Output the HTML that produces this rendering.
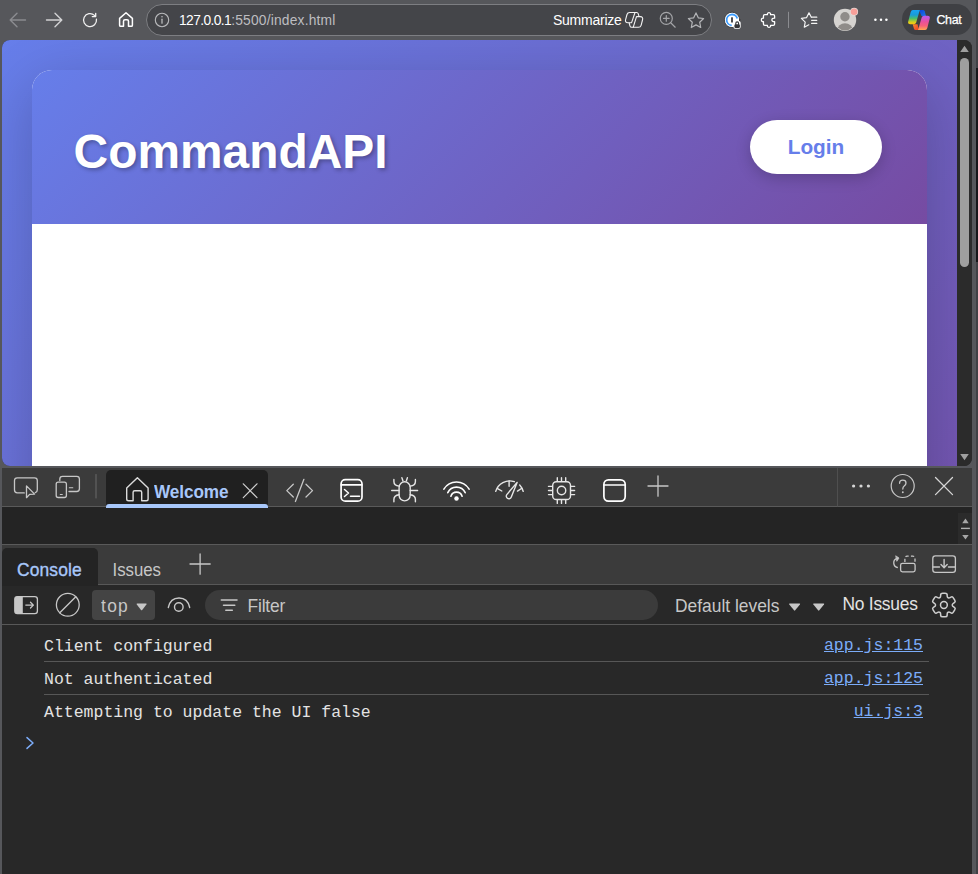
<!DOCTYPE html>
<html lang="en">
<head>
<meta charset="utf-8">
<title>CommandAPI</title>
<style>
*{box-sizing:border-box;margin:0;padding:0}
html,body{width:978px;height:874px;overflow:hidden}
body{background:#56575b;font-family:"Liberation Sans",sans-serif;position:relative}
.abs{position:absolute}
svg{position:absolute;overflow:visible}
/* ---------- browser toolbar ---------- */
#tb{position:absolute;left:0;top:0;width:978px;height:40px;background:#56575b}
#addr{position:absolute;left:146px;top:4px;width:566px;height:32px;border-radius:16px;background:#444549;border:1px solid #7d7e82}
#url{position:absolute;left:179px;top:13px;font-size:13.8px;line-height:16px;color:#bdbdc0;white-space:nowrap;letter-spacing:0.2px}
#url b{font-weight:normal;color:#fff;letter-spacing:-0.6px}
#summ{position:absolute;left:553px;top:12px;font-size:14px;line-height:16px;color:#fff;white-space:nowrap;letter-spacing:-0.25px}
#chat{position:absolute;left:902px;top:4px;width:69.500px;height:31px;border-radius:15.500px;background:#3f4044}
#chat span{position:absolute;left:34.500px;top:8px;font-size:12.4px;line-height:16px;color:#fff;letter-spacing:-0.35px;-webkit-text-stroke:0.25px #fff}
/* ---------- page viewport ---------- */
#vp{position:absolute;left:2px;top:40px;width:970px;height:426px;border-radius:8px;overflow:hidden;background:#2b2b2b}
#pg{position:absolute;left:0;top:0;width:955px;height:803px;background:linear-gradient(135deg,#667eea 0%,#764ba2 100%)}
#card{position:absolute;left:30px;top:30px;width:895px;height:740px;border-radius:20px;background:#fff;box-shadow:0 15px 60px rgba(0,0,0,.2);overflow:hidden}
#hdr{position:absolute;left:0;top:0;width:895px;height:154px;background:linear-gradient(135deg,#667eea 0%,#764ba2 100%)}
#h1{position:absolute;left:41.600px;top:53.5px;font-size:47.9px;line-height:56px;font-weight:bold;color:#fff;letter-spacing:0;text-shadow:2px 2px 4px rgba(0,0,0,.3);white-space:nowrap}
#login{position:absolute;left:718px;top:50px;width:132px;height:54px;border-radius:27px;background:#fff;box-shadow:0 4px 15px rgba(0,0,0,.2);color:#667eea;font-weight:bold;font-size:20.8px;line-height:54px;text-align:center}
#sb{position:absolute;left:955px;top:0;width:15px;height:426px;background:#2b2b2b}
#sb .th{position:absolute;left:3px;top:18px;width:9px;height:209px;border-radius:4.5px;background:#9f9f9f}
/* ---------- devtools ---------- */
#dt{position:absolute;left:2px;top:468px;width:970px;height:406px;background:#282828;color:#e3e3e3}
#dtbar{position:absolute;left:0;top:0;width:970px;height:38px;background:#3b3b3b}
#dtline1{position:absolute;left:0;top:38px;width:970px;height:1px;background:#5a5a5a}
#dtgap{position:absolute;left:0;top:39px;width:970px;height:37px;background:#242424}
#dtline2{position:absolute;left:0;top:76px;width:970px;height:1px;background:#5a5a5a}
#drw{position:absolute;left:0;top:77px;width:970px;height:40px;background:#3b3b3b}
#dtline3{position:absolute;left:0;top:116px;width:970px;height:1px;background:#585858}
#ctb{position:absolute;left:0;top:118px;width:970px;height:38px;background:#282828}
#dtline4{position:absolute;left:0;top:156px;width:970px;height:1px;background:#585858}
.ui{font-size:16.4px;line-height:20px;white-space:nowrap;position:absolute;letter-spacing:-0.2px;transform:scaleY(1.05);transform-origin:0 16px}
.mono{font-family:"Liberation Mono",monospace;font-size:16.5px;line-height:20px;white-space:nowrap;position:absolute;color:#e3e3e3}
.lnk{font-family:"Liberation Mono",monospace;font-size:16.5px;line-height:20px;white-space:nowrap;position:absolute;color:#7cacf8;text-decoration:underline}

#wtab{position:absolute;left:104px;top:2px;width:162px;height:37px;border-radius:5px 5px 0 0;background:#202020}
#wul{position:absolute;left:104px;top:36px;width:162px;height:3.5px;border-radius:3px 3px 0 0;background:#a8c7fa}
#gapsb{position:absolute;left:956px;top:45px;width:14px;height:31px;background:#2b2b2b}
#ctab{position:absolute;left:0;top:80px;width:96px;height:38px;border-radius:5px 5px 0 0;background:#242424}
#topbtn{position:absolute;left:90px;top:122px;width:63px;height:30px;border-radius:4px;background:#444444}
#filt{position:absolute;left:203px;top:122px;width:453px;height:30px;border-radius:15px;background:#3b3b3b}
.row{position:absolute;left:42px;width:885px;height:1px;background:#575757}
</style>
</head>
<body>
<div id="tb">
  <div id="addr"></div>
  <div id="url"><b>127.0.0.1</b>:5500/index.html</div>
  <div id="summ">Summarize</div>
  <div id="chat"><span>Chat</span></div>

  <svg id="tbsvg" width="978" height="40" viewBox="0 0 978 40" style="left:0;top:0" fill="none" stroke-linecap="round" stroke-linejoin="round">
    <!-- back -->
    <path d="M25.5 20H10.5M17 13.2L10.2 20L17 26.8" stroke="#8b8c90" stroke-width="1.4"/>
    <!-- forward -->
    <path d="M46.5 20H61.5M55 13.2L61.8 20L55 26.8" stroke="#d2d2d4" stroke-width="1.4"/>
    <!-- refresh -->
    <path d="M96.450 19.200A6.500 6.500 0 1 1 94.500 15.400" stroke="#f0f0f0" stroke-width="1.300"/>
    <path d="M95.700 13.300V16.600H92.300" stroke="#f4f4f4" stroke-width="1.300"/>
    <path d="M95.700 14.200V16.600H93.300Z" fill="#f4f4f4" stroke="none"/>
    <!-- home -->
    <path d="M119.6 18.4L126 12.7L132.4 18.4V25.2Q132.400 26.3 131.300 26.3H128.500V21.200Q128.500 19.700 127.000 19.700H125.000Q123.500 19.700 123.500 21.200V26.3H120.700Q119.600 26.3 119.600 25.200Z" stroke="#ffffff" stroke-width="1.5"/>
    <!-- info -->
    <circle cx="162" cy="20" r="6.7" stroke="#b9babc" stroke-width="1.1"/>
    <path d="M162 19.2V23.2" stroke="#b9babc" stroke-width="1.3"/>
    <circle cx="162" cy="16.8" r="0.8" fill="#b9babc" stroke="none"/>
    <!-- copilot outline -->
    <g stroke="#f2f2f2" stroke-width="1.100">
      <path d="M635.000 12.500H629.600Q627.600 12.500 627.000 14.500L625.600 19.600Q624.800 22.700 628.000 22.700H631.600Z"/>
      <path d="M635.000 12.500H636.600Q637.800 12.500 638.200 13.700L639.000 16.400"/>
      <path d="M633.200 27.300H638.500Q640.500 27.300 641.100 25.300L642.500 20.000Q643.400 16.600 640.200 16.600H636.500Z"/>
      <path d="M633.200 27.300H631.600Q630.400 27.300 630.000 26.100L629.200 23.000"/>
    </g>
    <!-- zoom -->
    <g stroke="#a4a5a8" stroke-width="1.2">
      <circle cx="666.3" cy="18.4" r="6"/>
      <path d="M670.700 22.800L675.200 27.200M663.500 18.400H669.100M666.300 15.600V21.200"/>
    </g>
    <!-- star -->
    <path d="M696 12.900L698.300 17.800L703.600 18.500L699.700 22.200L700.700 27.500L696 24.900L691.300 27.500L692.300 22.200L688.400 18.500L693.700 17.800Z" stroke="#b4b5b8" stroke-width="1.2"/>
    <!-- 1password-like -->
    <circle cx="732.050" cy="19.900" r="7.700" fill="#ffffff" stroke="#2b2c30" stroke-width="0.800"/>
    <rect x="733.400" y="20.800" width="7.300" height="8.000" rx="2.600" fill="#ffffff" stroke="none"/>
    <path d="M737.250 18.400A5.400 5.400 0 1 0 731.700 25.300" stroke="#3b9cff" stroke-width="1.800" stroke-linecap="butt"/>
    <rect x="731.100" y="17.300" width="1.800" height="5.200" fill="#3a3b3f" stroke="none"/>
    <rect x="734.400" y="24.200" width="5.500" height="3.700" rx="1.200" fill="#333437" stroke="none"/>
    <path d="M735.800 24.400V23.300A1.400 1.400 0 0 1 738.600 23.300V24.400" stroke="#333437" stroke-width="1.100"/>
    <!-- puzzle -->
    <path d="M764.750 14.700H767.400C767.000 12.000 771.000 12.000 770.600 14.700H773.300Q774.600 14.700 774.600 16.000V18.200C771.000 17.700 771.000 22.100 774.600 21.600V24.000Q774.600 25.300 773.300 25.300H770.600C771.000 28.000 767.000 28.000 767.400 25.300H764.750Q763.450 25.300 763.450 24.000V21.600C760.700 22.100 760.700 17.700 763.450 18.200V16.000Q763.450 14.700 764.750 14.700Z" stroke="#ffffff" stroke-width="1.300"/>
    <!-- separator -->
    <path d="M788.500 12.200V27.600" stroke="#8b8c90" stroke-width="1"/>
    <!-- favourites -->
    <g stroke="#f4f4f4" stroke-width="1.200">
      <path d="M811.300 17.200L809.000 12.800L806.600 17.600L801.400 18.400L805.200 22.100L804.300 27.200L808.800 24.800"/>
      <path d="M811.600 17.200H816.800M811.600 20.300H816.800M811.600 23.400H816.800"/>
    </g>
    <!-- avatar -->
    <circle cx="845.000" cy="19.900" r="11.200" fill="#d5d3d0" stroke="none"/>
    <circle cx="844.950" cy="16.800" r="4.700" fill="#8f8c89" stroke="none"/>
    <clipPath id="avc"><circle cx="845.000" cy="19.900" r="10.500"/></clipPath>
    <ellipse cx="845.000" cy="30.200" rx="7.700" ry="7.000" fill="#8f8c89" stroke="none" clip-path="url(#avc)"/>
    <circle cx="854.100" cy="11.700" r="4.000" fill="#e6dbd8" stroke="none"/>
    <circle cx="854.100" cy="11.700" r="3.300" fill="#f79f99" stroke="none"/>
    <!-- copilot colour logo -->
    <defs>
      <linearGradient id="cgl" x1="0" y1="0" x2="0" y2="1"><stop offset="0" stop-color="#18a4f4"/><stop offset=".35" stop-color="#1a9bd8"/><stop offset=".6" stop-color="#4bbf6a"/><stop offset=".85" stop-color="#d9cf1c"/><stop offset="1" stop-color="#fcc40f"/></linearGradient>
      <linearGradient id="cgr" x1="0" y1="0" x2="0" y2="1"><stop offset="0" stop-color="#b45cf5"/><stop offset=".4" stop-color="#e8509f"/><stop offset=".7" stop-color="#f7607a"/><stop offset="1" stop-color="#ffa850"/></linearGradient>
      <linearGradient id="cgt" x1="0" y1="0" x2="1" y2="1"><stop offset="0" stop-color="#0c3fd8"/><stop offset="1" stop-color="#1c78e8"/></linearGradient>
      <linearGradient id="cgb" x1="0" y1="0" x2="1" y2="1"><stop offset="0" stop-color="#ff8a30"/><stop offset="1" stop-color="#e83a24"/></linearGradient>
    </defs>
    <path d="M919.000 9.900H923.000Q924.300 9.900 924.700 11.200L926.000 15.900H921.500Z" fill="url(#cgt)" stroke="none"/>
    <path d="M919.000 30.000H915.700Q914.400 30.000 914.000 28.700L912.700 24.200H917.500Z" fill="url(#cgb)" stroke="none"/>
    <path d="M912.900 9.900H919.800L916.200 22.500Q915.700 24.300 913.800 24.300H910.300Q907.500 24.300 908.200 21.500L910.700 12.000Q911.300 9.900 912.900 9.900Z" fill="url(#cgl)" stroke="none"/>
    <path d="M925.200 30.000H918.000L921.700 17.500Q922.200 15.800 924.100 15.800H927.600Q930.400 15.800 929.700 18.600L927.300 28.000Q926.800 30.000 925.200 30.000Z" fill="url(#cgr)" stroke="none"/>
    <!-- dots -->
    <circle cx="875.400" cy="19.700" r="1.250" fill="#fff" stroke="none"/>
    <circle cx="881.000" cy="19.700" r="1.250" fill="#fff" stroke="none"/>
    <circle cx="886.400" cy="19.700" r="1.250" fill="#fff" stroke="none"/>
  </svg>
</div>

<div id="vp">
  <div id="pg">
    <div id="card">
      <div id="hdr">
        <div id="h1">CommandAPI</div>
        <div id="login">Login</div>
      </div>
    </div>
  </div>
  <div id="sb"><div class="th"></div>
    <svg width="15" height="426" viewBox="0 0 15 426" style="left:0;top:0"><path d="M3.200 12.000L7.500 5.800L11.800 12.000ZM3.200 414.000L7.500 420.200L11.800 414.000Z" fill="#9f9f9f"/></svg>
  </div>
</div>

<div class="abs" style="left:976.300px;top:0;width:2px;height:874px;background:#404145"></div>
<div class="abs" style="left:976.300px;top:68px;width:2px;height:194px;background:#17171a"></div>
<div id="dt">
  <div id="dtbar"></div>
  <div id="dtline1"></div>
  <div id="dtgap"></div>
  <div id="dtline2"></div>
  <div id="drw"></div>
  <div id="dtline3"></div>
  <div id="ctb"></div>
  <div id="dtline4"></div>

  <div id="wtab"></div>
  <div id="wul"></div>
  <div class="ui" id="t-welcome" style="left:152px;top:14px;color:#a8c7fa;font-weight:bold;font-size:17.2px;letter-spacing:-0.1px;transform:scaleY(1.1)">Welcome</div>
  <div id="gapsb"></div>
  <div id="ctab"></div>
  <div class="ui" id="t-console" style="left:15px;top:92px;color:#a8c7fa;font-size:17.4px;letter-spacing:0.15px;-webkit-text-stroke:0.35px #a8c7fa">Console</div>
  <div class="ui" id="t-issues" style="left:110.500px;top:93px;color:#c7c7c7;font-size:16.8px;letter-spacing:0">Issues</div>
  <div id="topbtn"></div>
  <div class="ui" id="t-top" style="left:99px;top:128px;color:#c7c7c7;font-size:17.4px;letter-spacing:1.3px">top</div>
  <div id="filt"></div>
  <div class="ui" id="t-filter" style="left:245.500px;top:128px;color:#c7c7c7;font-size:17.4px;letter-spacing:-0.17px">Filter</div>
  <div class="ui" id="t-levels" style="left:673px;top:128px;color:#c7c7c7;font-size:17.4px;letter-spacing:0">Default levels</div>
  <div class="ui" id="t-noissues" style="left:840.500px;top:126px;color:#e3e3e3;font-size:17.4px;letter-spacing:-0.25px">No Issues</div>

  <svg id="dtsvg" width="978" height="874" viewBox="0 0 978 874" style="left:-2px;top:-468px" fill="none" stroke="#c7c7c7" stroke-width="1.3" stroke-linecap="round" stroke-linejoin="round">
    <!-- inspect -->
    <path d="M24.300 492.900H17.300Q14.500 492.900 14.500 490.100V480.600Q14.500 477.800 17.300 477.800H34.500Q37.300 477.800 37.300 480.600V489.800Q37.300 492.200 35.300 492.700"/>
    <path d="M26.500 485.900V497.700L29.600 494.400L34.600 494.100Z"/>
    <!-- device -->
    <path d="M59.800 480.500V479.000Q59.800 476.300 62.500 476.300H76.700Q79.400 476.300 79.400 479.000V488.800Q79.400 491.500 76.700 491.500H69.000"/>
    <rect x="56.200" y="482.200" width="10.200" height="15.300" rx="2"/>
    <path d="M60.300 494.500H62.300M69.300 487.700H72.800" stroke-width="1.100"/>
    <!-- separator -->
    <path d="M96 474.500V498" stroke="#6a6a6a" stroke-width="1"/>
    <!-- welcome home -->
    <path d="M126.700 488.000L137.400 477.800L148.100 488.000V499.000Q148.100 500.800 146.300 500.800H141.700V492.300Q141.700 490.700 140.100 490.700H134.700Q133.100 490.700 133.100 492.300V500.800H128.500Q126.700 500.800 126.700 499.000Z" stroke="#dcdcdc" stroke-width="1.4"/>
    <!-- tab close -->
    <path d="M243.300 483.800L257.000 497.600M257.000 483.800L243.300 497.600" stroke="#d0d0d0" stroke-width="1.200"/>
    <!-- elements </> -->
    <path d="M293.300 484.300L286.800 490.600L293.300 497.000M306.000 484.300L312.500 490.600L306.000 497.000M303.900 479.300L295.400 501.500" stroke-width="1.300"/>
    <!-- console -->
    <g stroke="#ffffff" stroke-width="1.700">
      <rect x="341.100" y="479.600" width="20.900" height="21.600" rx="4.200"/>
      <path d="M341.300 484.900H361.800"/>
      <path d="M344.500 489.500L348.500 493.000L344.500 496.500M350.500 496.200H359.500" stroke-width="1.500"/>
    </g>
    <!-- bug -->
    <g stroke="#e6e6e6" stroke-width="1.400">
      <rect x="399.100" y="481.800" width="11.100" height="19.100" rx="5.550"/>
      <path d="M401.900 477.700L402.900 480.800M407.400 477.700L406.400 480.800"/>
      <path d="M399.100 486.100Q393.900 485.500 393.900 481.500V479.500M410.200 486.100Q415.400 485.500 415.400 481.500V479.500"/>
      <path d="M391.700 490.500H399.100M410.200 490.500H417.600"/>
      <path d="M399.100 494.700Q393.900 495.300 393.900 499.300V501.800M410.200 494.700Q415.400 495.300 415.400 499.300V501.800"/>
    </g>
    <!-- wifi -->
    <g stroke="#ffffff" stroke-width="1.600">
      <path d="M443.900 489.200A14.700 14.700 0 0 1 469.100 489.200"/>
      <path d="M447.800 492.700A9.600 9.600 0 0 1 465.200 492.700"/>
      <path d="M450.900 496.200A5.900 5.900 0 0 1 462.100 496.200"/>
      <circle cx="456.500" cy="498.400" r="2.250" fill="#ffffff" stroke="none"/>
    </g>
    <!-- perf gauge -->
    <g stroke="#e6e6e6" stroke-width="1.400">
      <path d="M495.700 491.400A14.400 14.400 0 0 1 514.300 481.700M519.700 484.900A14.400 14.400 0 0 1 523.200 491.400"/>
      <path d="M509.100 481.000V486.300M497.600 488.600L501.800 491.000M521.400 488.500L517.500 491.100"/>
      <path d="M517.100 482.400L506.800 494.600A2.600 2.600 0 1 0 511.300 497.100Z"/>
    </g>
    <!-- cpu -->
    <g stroke="#e6e6e6" stroke-width="1.400">
      <rect x="552.700" y="481.700" width="17.800" height="17.800" rx="3.600"/>
      <circle cx="561.550" cy="490.500" r="4.200"/>
      <path d="M557.300 481.000V477.700M561.500 481.000V477.700M565.700 481.000V477.700M557.300 500.200V503.400M561.500 500.200V503.400M565.700 500.200V503.400"/>
      <path d="M552.000 486.400H548.500M552.000 490.500H548.500M552.000 494.600H548.500M571.200 486.400H574.600M571.200 490.500H574.600M571.200 494.600H574.600"/>
    </g>
    <!-- application -->
    <g stroke="#ffffff" stroke-width="1.700">
      <rect x="603.900" y="479.800" width="21.300" height="21.300" rx="4.500"/>
      <path d="M604.100 485.000H625.000"/>
    </g>
    <!-- plus -->
    <path d="M648.000 486.000H668.000M658.000 476.000V496.200" stroke-width="1.300"/>
    <!-- right separator -->
    <path d="M837.500 468.500V506" stroke="#4f4f4f" stroke-width="1"/>
    <!-- dots -->
    <circle cx="853.600" cy="486.000" r="1.600" fill="#d6d6d6" stroke="none"/>
    <circle cx="861.000" cy="486.000" r="1.600" fill="#d6d6d6" stroke="none"/>
    <circle cx="868.400" cy="486.000" r="1.600" fill="#d6d6d6" stroke="none"/>
    <!-- help -->
    <circle cx="902.700" cy="486.000" r="11.500" stroke-width="1.200"/>
    <path d="M899.600 483.300Q899.600 480.200 902.800 480.200Q906.000 480.200 906.000 483.000Q906.000 484.800 904.200 486.000Q902.800 487.000 902.800 489.000" stroke-width="1.300"/>
    <circle cx="902.800" cy="492.300" r="0.950" fill="#c7c7c7" stroke="none"/>
    <!-- close -->
    <path d="M935.500 477.500L952.500 494.600M952.500 477.500L935.500 494.600" stroke="#d6d6d6" stroke-width="1.300"/>
    <!-- gap scrollbar arrows -->
    <path d="M962.200 523.300L965.450 518.500L968.700 523.300ZM962.200 535.000L965.450 539.500L968.700 535.000Z" fill="#a6a6a6" stroke="none"/>
    <path d="M961.000 528.400H969.900" stroke="#b0b0b0" stroke-width="1.400" stroke-linecap="butt"/>
    <!-- drawer plus -->
    <path d="M190.000 564.000H210.200M200.100 554.000V574.200" stroke-width="1.300"/>
    <!-- drawer icons right -->
    <g stroke-width="1.300">
      <path d="M897.300 567.500A4.800 4.800 0 0 1 896.800 558.400"/>
      <path d="M896.000 556.000L899.000 558.000L897.000 561.000Z" fill="#c7c7c7" stroke-width="0.8"/>
      <rect x="900.600" y="563.400" width="14.500" height="8.500" rx="1.800"/>
      <path d="M904.900 562.600V558.400Q904.900 556.200 907.100 556.200H912.800Q915.000 556.200 915.000 558.400V562.600" stroke-dasharray="3.200 2.250" stroke-dashoffset="-0.6" stroke-linecap="butt"/>
      <rect x="932.800" y="555.800" width="22.600" height="16.600" rx="2.600"/>
      <path d="M933.000 567.000H939.500M948.500 567.000H955.200M944.100 559.500V567.500M941.000 564.600L944.100 567.700L947.200 564.600" stroke-width="1.400"/>
    </g>
    <!-- sidebar toggle -->
    <rect x="14.800" y="596.600" width="22.600" height="17.000" rx="2.600" stroke-width="1.300"/>
    <path d="M14.800 599.200Q14.800 596.600 17.400 596.600H22.800V613.600H17.400Q14.800 613.600 14.800 611.000Z" fill="#c7c7c7" stroke="none"/>
    <path d="M25.800 605.100H33.300M30.500 602.200L33.400 605.100L30.500 608.000" stroke-width="1.300"/>
    <!-- clear -->
    <circle cx="67.800" cy="604.800" r="11.400" stroke-width="1.300"/>
    <path d="M59.800 612.800L75.800 596.800" stroke-width="1.300"/>
    <!-- top triangle -->
    <path d="M137.200 603.600H146.000Q147.000 603.600 146.400 604.400L142.200 609.900Q141.600 610.600 141.000 609.900L136.800 604.400Q136.200 603.600 137.200 603.600Z" fill="#c7c7c7" stroke="none"/>
    <!-- eye -->
    <path d="M168.300 607.500Q170.300 598.000 179.000 598.000Q187.700 598.000 189.700 607.500" stroke-width="1.400"/>
    <circle cx="178.800" cy="607.000" r="4.300" stroke-width="1.400"/>
    <!-- filter icon -->
    <path d="M221.300 600.000H237.000M223.500 605.200H234.800M225.800 610.200H232.300" stroke-width="1.500"/>
    <!-- level triangles -->
    <path d="M789.700 603.600H799.500Q800.500 603.600 799.900 604.400L795.200 610.300Q794.600 611.000 794.000 610.300L789.300 604.400Q788.700 603.600 789.700 603.600Z" fill="#c7c7c7" stroke="none"/>
    <path d="M813.800 603.600H823.600Q824.600 603.600 824.000 604.400L819.300 610.300Q818.700 611.000 818.100 610.300L813.400 604.400Q812.800 603.600 813.800 603.600Z" fill="#c7c7c7" stroke="none"/>
    <!-- gear -->
    <g transform="translate(943.900 605.000)" stroke-width="1.500" stroke="#cfcfcf">
      <circle r="3.400"/>
      <path d="M3.86 -7.51Q3.32 -7.82 3.27 -9.01L3.21 -10.60Q3.16 -11.78 1.26 -11.78L-1.26 -11.78Q-3.16 -11.78 -3.21 -10.60L-3.27 -9.01Q-3.32 -7.82 -3.86 -7.51L-4.58 -7.10Q-5.12 -6.79 -6.17 -7.34L-7.57 -8.08Q-8.63 -8.63 -9.57 -6.99L-10.84 -4.80Q-11.78 -3.16 -10.78 -2.52L-9.44 -1.67Q-8.44 -1.04 -8.44 -0.41L-8.44 0.41Q-8.44 1.04 -9.44 1.67L-10.78 2.52Q-11.78 3.16 -10.84 4.80L-9.57 6.99Q-8.63 8.63 -7.57 8.08L-6.17 7.34Q-5.12 6.79 -4.58 7.10L-3.86 7.51Q-3.32 7.82 -3.27 9.01L-3.21 10.60Q-3.16 11.78 -1.26 11.78L1.26 11.78Q3.16 11.78 3.21 10.60L3.27 9.01Q3.32 7.82 3.86 7.51L4.58 7.10Q5.12 6.79 6.17 7.34L7.57 8.08Q8.63 8.63 9.57 6.99L10.84 4.80Q11.78 3.16 10.78 2.52L9.44 1.67Q8.44 1.04 8.44 0.41L8.44 -0.41Q8.44 -1.04 9.44 -1.67L10.78 -2.52Q11.78 -3.16 10.84 -4.80L9.57 -6.99Q8.63 -8.63 7.57 -8.08L6.17 -7.34Q5.12 -6.79 4.58 -7.10Z"/>
    </g>
    <!-- prompt -->
    <path d="M27.000 737.600L33.000 743.000L27.000 748.400" stroke="#7cacf8" stroke-width="1.500"/>
  </svg>
  <div class="mono" style="left:42px;top:169px">Client configured</div>
  <div class="lnk" style="right:49px;top:168px">app.js:115</div>
  <div class="row" style="top:193px"></div>
  <div class="mono" style="left:42px;top:202px">Not authenticated</div>
  <div class="lnk" style="right:49px;top:201px">app.js:125</div>
  <div class="row" style="top:226px"></div>
  <div class="mono" style="left:42px;top:235px">Attempting to update the UI false</div>
  <div class="lnk" style="right:49px;top:234px">ui.js:3</div>
</div>
</body>
</html>
